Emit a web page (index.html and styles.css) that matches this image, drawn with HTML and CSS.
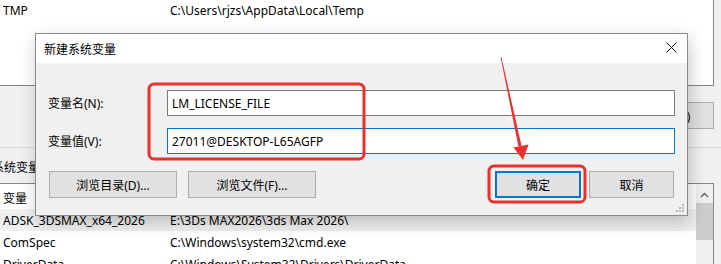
FILE: index.html
```html
<!DOCTYPE html>
<html lang="zh-CN">
<head>
<meta charset="utf-8">
<title>新建系统变量</title>
<link rel="stylesheet" href="styles.css">
</head>
<body>
<div class="screen">
  <div class="list list-top">
    <div class="row"><span class="c1">TMP</span><span class="c2">C:\Users\rjzs\AppData\Local\Temp</span></div>
  </div>
  <div class="mid">
    <div class="btn-row"><button class="win-btn bg-btn">删除(L)</button></div>
    <div class="sep"></div>
    <div class="group-label">系统变量(S)</div>
  </div>
  <div class="list list-bottom">
    <div class="rows">
      <div class="row head"><span class="c1">变量</span><span class="c2">值</span></div>
      <div class="row selected"><span class="c1">ADSK_3DSMAX_x64_2026</span><span class="c2">E:\3Ds MAX2026\3ds Max 2026\</span></div>
      <div class="row"><span class="c1">ComSpec</span><span class="c2">C:\Windows\system32\cmd.exe</span></div>
      <div class="row"><span class="c1">DriverData</span><span class="c2">C:\Windows\System32\Drivers\DriverData</span></div>
    </div>
    <div class="scrollbar">
      <svg class="sb-arrow" width="9" height="6" viewBox="0 0 9 6"><path d="M1 5 L4.5 1.5 L8 5" fill="none" stroke="#606060" stroke-width="1.3"/></svg>
      <div class="sb-thumb"></div>
    </div>
  </div>

  <div class="dialog">
    <div class="titlebar">
      <span class="title">新建系统变量</span>
      <svg class="close" width="11" height="11" viewBox="0 0 11 11"><path d="M0.5 0.5 L10.5 10.5 M10.5 0.5 L0.5 10.5" stroke="#111" stroke-width="1"/></svg>
    </div>
    <div class="dbody">
      <div class="form">
        <label class="lbl">变量名(N):</label>
        <div class="input">LM_LICENSE_FILE</div>
        <label class="lbl">变量值(V):</label>
        <div class="input focus">27011@DESKTOP-L65AGFP</div>
      </div>
      <div class="actions">
        <div class="left">
          <button class="win-btn wide">浏览目录(D)...</button>
          <button class="win-btn wide">浏览文件(F)...</button>
        </div>
        <div class="right">
          <button class="win-btn def">确定</button>
          <button class="win-btn">取消</button>
        </div>
      </div>
      <svg class="grip" width="9" height="9" viewBox="0 0 9 9" fill="#b8b8b8"><rect x="6" y="0" width="2" height="2"/><rect x="3" y="3" width="2" height="2"/><rect x="6" y="3" width="2" height="2"/><rect x="0" y="6" width="2" height="2"/><rect x="3" y="6" width="2" height="2"/><rect x="6" y="6" width="2" height="2"/></svg>
    </div>
  </div>

  <svg class="annot" width="721" height="264" viewBox="0 0 721 264">
    <rect x="149" y="84" width="215" height="75" rx="5" fill="none" stroke="#e8312c" stroke-width="3"/>
    <rect x="489" y="166" width="96" height="36" rx="5" fill="none" stroke="#e8312c" stroke-width="3"/>
    <polygon points="500.6,57 501.4,57 521.6,146 518.4,146.6" fill="#e8312c"/>
    <polygon points="523,160 513.5,147.5 528.5,144.5" fill="#e8312c"/>
  </svg>
</div>
</body>
</html>
```
FILE: styles.css
```css
* { box-sizing: border-box; }
html, body { margin: 0; padding: 0; }
body {
  width: 721px;
  height: 264px;
  overflow: hidden;
  background: #f0f0f0;
  font-family: "Noto Sans", "Noto Sans CJK SC", sans-serif;
  font-size: 12px;
  color: #000;
}
.screen {
  position: relative;
  width: 721px;
  height: 264px;
  overflow: hidden;
}
.list {
  width: 714px;
  background: #fff;
  border-right: 1px solid #828790;
}
.list-top {
  height: 86px;
  border-bottom: 1px solid #828790;
  padding-top: 1px;
}
.row {
  display: flex;
  height: 18px;
  align-items: center;
  white-space: nowrap;
}
.c1 { width: 170px; padding-left: 3px; flex: none; }
.c2 { flex: none; }

.mid {
  height: 97px;
  display: flex;
  flex-direction: column;
}
.btn-row {
  display: flex;
  justify-content: flex-end;
  width: 714px;
  padding-top: 16px;
}
.bg-btn { width: 91px; height: 27px; }
.sep {
  margin-top: 18px;
  height: 1px;
  background: #dadada;
}
.group-label {
  margin-top: 12px;
  margin-left: -8px;
  line-height: 16px;
}

.list-bottom {
  height: 90px;
  border-top: 1px solid #828790;
  display: flex;
}
.rows { flex: 1; }
.list-bottom .row { height: 22px; }
.list-bottom .row.head { height: 25px; padding-top: 2px; }
.row.selected { background: #efefef; }
.scrollbar {
  width: 17px;
  background: #f0f0f0;
  display: flex;
  flex-direction: column;
  align-items: center;
  padding-top: 8px;
}
.sb-arrow { display: block; }
.sb-thumb {
  margin-top: 5px;
  width: 17px;
  height: 37px;
  background: #cdcdcd;
}

.win-btn {
  font-family: inherit;
  font-size: 12px;
  color: #000;
  background: #e1e1e1;
  border: 1px solid #adadad;
  height: 27px;
  width: 85px;
  padding: 0;
  margin: 0;
}
.win-btn.wide { width: 128px; }
.win-btn.def { border: 2px solid #0078d7; width: 86px; }

.dialog {
  position: absolute;
  left: 35px;
  top: 33px;
  width: 653px;
  height: 183px;
  border: 1px solid #8a8a8a;
  background: #f0f0f0;
  box-shadow: 2px 6px 16px rgba(0, 0, 0, 0.22);
  display: flex;
  flex-direction: column;
}
.titlebar {
  height: 29px;
  background: #fff;
  display: flex;
  align-items: center;
  justify-content: space-between;
  padding: 0 10px 0 8px;
}
.title { font-size: 12px; }
.close { display: block; margin-top: -2px; }
.dbody {
  flex: 1;
  position: relative;
  padding: 27px 11px 0 12px;
}
.form {
  display: grid;
  grid-template-columns: 119px 508px;
  row-gap: 12px;
  align-items: center;
}
.lbl { padding-left: 0; }
.input {
  height: 26px;
  background: #fff;
  border: 1px solid #7a7a7a;
  padding-left: 4px;
  display: flex;
  align-items: center;
  white-space: nowrap;
}
.input.focus { border-color: #0078d7; }
.actions {
  margin-top: 17px;
  display: flex;
  justify-content: space-between;
}
.left { display: flex; gap: 11px; padding-left: 1px; }
.right { display: flex; gap: 8px; padding-right: 2px; }
.grip {
  position: absolute;
  right: 2px;
  bottom: 2px;
}
.annot {
  position: absolute;
  left: 0;
  top: 0;
}
```
